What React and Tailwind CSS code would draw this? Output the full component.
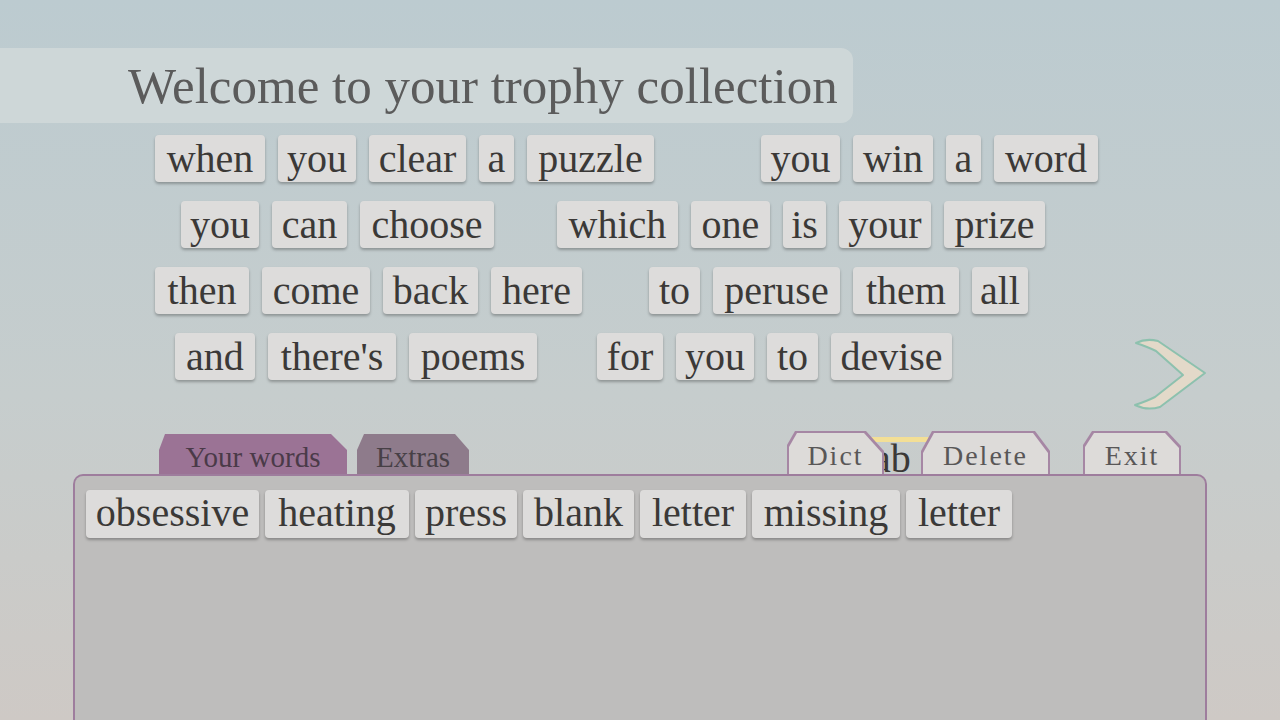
import React from 'react';

// Poem rows: each row has a left offset, two phrases, and a gap between the phrases
const poemRows = [
  {
    start: 'pl-[155px]',
    gap: 'ml-[107px]',
    left: [
      { word: 'when', w: 'w-[110px]' },
      { word: 'you', w: 'w-[78px]' },
      { word: 'clear', w: 'w-[97px]' },
      { word: 'a', w: 'w-[35px]' },
      { word: 'puzzle', w: 'w-[127px]' },
    ],
    right: [
      { word: 'you', w: 'w-[79px]' },
      { word: 'win', w: 'w-[80px]' },
      { word: 'a', w: 'w-[35px]' },
      { word: 'word', w: 'w-[104px]' },
    ],
  },
  {
    start: 'pl-[181px]',
    gap: 'ml-[63px]',
    left: [
      { word: 'you', w: 'w-[78px]' },
      { word: 'can', w: 'w-[75px]' },
      { word: 'choose', w: 'w-[134px]' },
    ],
    right: [
      { word: 'which', w: 'w-[121px]' },
      { word: 'one', w: 'w-[79px]' },
      { word: 'is', w: 'w-[43px]' },
      { word: 'your', w: 'w-[92px]' },
      { word: 'prize', w: 'w-[101px]' },
    ],
  },
  {
    start: 'pl-[155px]',
    gap: 'ml-[67px]',
    left: [
      { word: 'then', w: 'w-[94px]' },
      { word: 'come', w: 'w-[108px]' },
      { word: 'back', w: 'w-[95px]' },
      { word: 'here', w: 'w-[91px]' },
    ],
    right: [
      { word: 'to', w: 'w-[51px]' },
      { word: 'peruse', w: 'w-[127px]' },
      { word: 'them', w: 'w-[106px]' },
      { word: 'all', w: 'w-[56px]' },
    ],
  },
  {
    start: 'pl-[175px]',
    gap: 'ml-[60px]',
    left: [
      { word: 'and', w: 'w-[80px]' },
      { word: "there's", w: 'w-[128px]' },
      { word: 'poems', w: 'w-[128px]' },
    ],
    right: [
      { word: 'for', w: 'w-[66px]' },
      { word: 'you', w: 'w-[78px]' },
      { word: 'to', w: 'w-[51px]' },
      { word: 'devise', w: 'w-[121px]' },
    ],
    arrow: true,
  },
];

const trophies = [
  { word: 'obsessive', w: 'w-[173px]' },
  { word: 'heating', w: 'w-[144px]' },
  { word: 'press', w: 'w-[102px]' },
  { word: 'blank', w: 'w-[111px]' },
  { word: 'letter', w: 'w-[106px]' },
  { word: 'missing', w: 'w-[148px]' },
  { word: 'letter', w: 'w-[106px]' },
];

const serif = "font-['Liberation_Serif','DejaVu_Serif',serif]";

const Tile = ({ word, w, h = 'h-[47px] leading-[47px]' }) => (
  <div
    className={`${w} ${h} shrink-0 rounded-[4px] bg-[#dddcdb] text-center text-[40px] text-[#3b3937] shadow-[0_2px_3px_rgba(0,0,0,0.28)]`}
  >
    {word}
  </div>
);

const NextArrow = () => (
  <svg width="80" height="78" viewBox="1130 335 80 78" className="ml-[178px] mt-[2px] shrink-0 overflow-visible">
    <path
      d="M1136 343 Q1146 338 1158 341 L1205 373 L1160 407 Q1147 411 1135 405 Q1147 401 1155 397 L1183 375 L1156 351 Q1148 347 1136 343 Z"
      fill="#e3d9c9"
      stroke="#8dc1ae"
      strokeWidth="2"
      strokeLinejoin="round"
    />
  </svg>
);

// Chamfered button with a purple outline: outer shape is the border, inner shape the fill
const EdgeButton = ({ label, w, clip, ml = '' }) => (
  <div className={`${w} ${ml} relative z-10 h-[43px] shrink-0 bg-[#a687a4] px-[2px] pt-[2px] ${clip}`}>
    <div
      className={`flex h-full w-full items-end justify-center bg-[#dddbd9] pb-[4px] text-[28px] leading-none tracking-[2px] text-[#595757] ${clip}`}
    >
      {label}
    </div>
  </div>
);

export default function App() {
  return (
    <div
      className={`${serif} flex h-[720px] w-full flex-col overflow-hidden bg-gradient-to-b from-[#bccbd0] via-[#c6cdcd] via-55% to-[#cec9c5]`}
    >
      {/* Title banner */}
      <div className="pt-[48px]">
        <div className="h-[75px] w-[853px] rounded-r-[12px] bg-[#d2d9da]/80 pl-[128px] pt-[1px] text-[51px] leading-[75px] text-[#5b5b5b]">
          Welcome to your trophy collection
        </div>
      </div>

      {/* Poem */}
      <div className="mt-[12px] flex flex-col gap-[19px]">
        {poemRows.map((row, i) => (
          <div key={i} className={`flex h-[47px] items-start ${row.start}`}>
            <div className="flex gap-[13px]">
              {row.left.map((t, j) => (
                <Tile key={j} {...t} />
              ))}
            </div>
            <div className={`flex gap-[13px] ${row.gap}`}>
              {row.right.map((t, j) => (
                <Tile key={j} {...t} />
              ))}
            </div>
            {row.arrow && <NextArrow />}
          </div>
        ))}
      </div>

      {/* Tabs and buttons */}
      <div className="relative mt-[51px] flex h-[43px] shrink-0 items-end">
        <div className="ml-[159px] flex h-[40px] w-[188px] items-end justify-center bg-[#9b7395] pb-[2px] text-[29px] leading-none text-[#4a3a48] [clip-path:polygon(0_16px,6px_0,calc(100%-16px)_0,100%_16px,100%_100%,0_100%)]">
          Your words
        </div>
        <div className="ml-[10px] flex h-[40px] w-[112px] items-end justify-center bg-[#8e7b8b] pb-[2px] text-[29px] leading-none text-[#474046] [clip-path:polygon(0_16px,7px_0,calc(100%-14px)_0,100%_16px,100%_100%,0_100%)]">
          Extras
        </div>

        <EdgeButton
          label="Dict"
          w="w-[97px]"
          ml="ml-[318px]"
          clip="[clip-path:polygon(0_14px,8px_0,calc(100%-18px)_0,100%_20px,100%_100%,0_100%)]"
        />
        <div className="relative z-0 -mx-[14px] h-[37px] w-[65px] shrink-0 border-t-[5px] border-[#f3df96] pl-[3px] text-[40px] leading-[34px] text-[#3b3937]">
          ab
        </div>
        <EdgeButton
          label="Delete"
          w="w-[129px]"
          clip="[clip-path:polygon(0_20px,11px_0,calc(100%-15px)_0,100%_20px,100%_100%,0_100%)]"
        />
        <EdgeButton
          label="Exit"
          w="w-[98px]"
          ml="ml-[33px]"
          clip="[clip-path:polygon(0_14px,9px_0,calc(100%-14px)_0,100%_15px,100%_100%,0_100%)]"
        />
      </div>

      {/* Trophy panel */}
      <div className="ml-[73px] w-[1134px] flex-1 rounded-t-[10px] border-[2.5px] border-b-0 border-[#9e7d9d] bg-[#bebdbc] pl-[11px] pt-[14px]">
        <div className="flex gap-[6px]">
          {trophies.map((t, i) => (
            <Tile key={i} {...t} h="h-[48px] leading-[46px]" />
          ))}
        </div>
      </div>
    </div>
  );
}
